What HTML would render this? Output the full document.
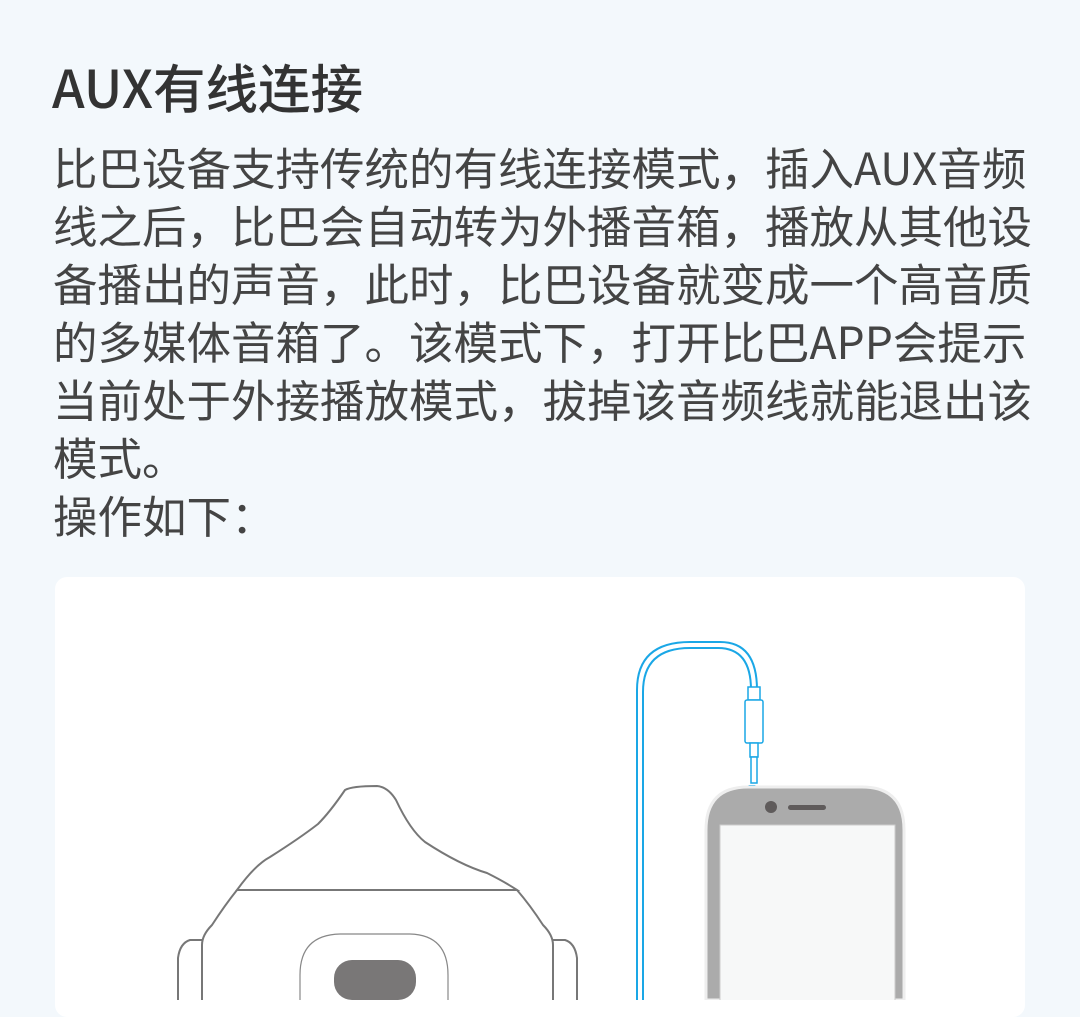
<!DOCTYPE html>
<html><head><meta charset="utf-8"><style>
html,body{margin:0;padding:0;}
body{width:1080px;height:1000px;overflow:hidden;background:#f3f8fc;font-family:"Liberation Sans","Noto Sans CJK SC",sans-serif;position:relative;}
h1{position:absolute;left:52px;top:50px;margin:0;font-size:52.5px;font-weight:500;color:#333;line-height:72px;font-family:"Noto Sans CJK SC","Liberation Sans",sans-serif;}
.p{position:absolute;left:53px;top:137px;margin:0;font-size:44.5px;line-height:58px;color:#444;white-space:nowrap;font-family:"Noto Sans CJK SC","Liberation Sans",sans-serif;}
.card{position:absolute;left:55px;top:577px;width:970px;height:440px;background:#fff;border-radius:12px;}
svg{position:absolute;left:0;top:0;}
</style></head><body>
<h1>AUX有线连接</h1>
<div class="p">比巴设备支持传统的有线连接模式，插入AUX音频<br>线之后，比巴会自动转为外播音箱，播放从其他设<br>备播出的声音，此时，比巴设备就变成一个高音质<br>的多媒体音箱了。该模式下，打开比巴APP会提示<br>当前处于外接播放模式，拔掉该音频线就能退出该<br>模式。<br>操作如下：</div>
<div class="card"></div>
<svg width="1080" height="1000" viewBox="0 0 1080 1000">
<g fill="none" stroke="#1aa7e6" stroke-width="2">
<path d="M637 1000 V690 Q637 642 690 642 H720 Q757 642 757 690 V700"/>
<path d="M643 1000 V692 Q643 648 690 648 H718 Q751 648 751 690 V700"/>
</g>
<g fill="#fff" stroke="#1aa7e6" stroke-width="1.5">
<rect x="748" y="687" width="12" height="13"/>
<rect x="745" y="700" width="18" height="43" rx="2"/>
<rect x="750" y="743" width="8" height="14"/>
<rect x="751" y="757" width="6" height="26"/>
</g>
<rect x="748" y="785" width="8" height="3" rx="1.5" fill="#1aa7e6"/>
<path d="M706 1000 V830 Q706 787 748 787 H862 Q904 787 904 830 V1000 Z" fill="#ababab" stroke="#eee" stroke-width="3"/>
<rect x="720" y="825" width="175" height="180" fill="#f7f8f8" stroke="#ccc" stroke-width="1"/>
<ellipse cx="771" cy="807" rx="6" ry="6" fill="#5f5b5b"/>
<rect x="788" y="805" width="38" height="5" rx="2.5" fill="#5f5b5b"/>
<g fill="none" stroke="#777" stroke-width="2">
<path d="M237 890 Q255 865 270 857 Q300 838 318 824 Q330 812 345 790 Q352 786 377 786 Q388 787 396 800 Q410 830 425 842 Q460 865 487 873 Q505 882 517 890 Z"/>
<path d="M237 890 Q225 905 212 925 Q202 935 202 945 V1000"/>
<path d="M517 890 Q530 905 543 925 Q553 935 553 945 V1000"/>
<path d="M202 940 H190 Q180 943 178 958 V1000"/>
<path d="M553 940 H565 Q575 943 577 958 V1000"/>
</g>
<path d="M300 1000 V975 Q300 935 340 934 H410 Q448 935 448 975 V1000" fill="none" stroke="#888" stroke-width="1.2"/>
<rect x="334" y="960" width="82" height="40" rx="18" fill="#797777"/>
</svg>
</body></html>
